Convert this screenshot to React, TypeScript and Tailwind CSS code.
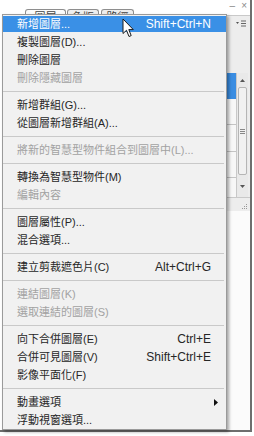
import React from "react";

type MenuItem =
  | { label: string; shortcut?: string; disabled?: boolean; active?: boolean; submenu?: boolean }
  | "sep";

const items: MenuItem[] = [
  { label: "新增圖層...", shortcut: "Shift+Ctrl+N", active: true },
  { label: "複製圖層(D)..." },
  { label: "刪除圖層" },
  { label: "刪除隱藏圖層", disabled: true },
  "sep",
  { label: "新增群組(G)..." },
  { label: "從圖層新增群組(A)..." },
  "sep",
  { label: "將新的智慧型物件組合到圖層中(L)...", disabled: true },
  "sep",
  { label: "轉換為智慧型物件(M)" },
  { label: "編輯內容", disabled: true },
  "sep",
  { label: "圖層屬性(P)..." },
  { label: "混合選項..." },
  "sep",
  { label: "建立剪裁遮色片(C)", shortcut: "Alt+Ctrl+G" },
  "sep",
  { label: "連結圖層(K)", disabled: true },
  { label: "選取連結的圖層(S)", disabled: true },
  "sep",
  { label: "向下合併圖層(E)", shortcut: "Ctrl+E" },
  { label: "合併可見圖層(V)", shortcut: "Shift+Ctrl+E" },
  { label: "影像平面化(F)" },
  "sep",
  { label: "動畫選項", submenu: true },
  { label: "浮動視窗選項..." },
];

function Cursor() {
  return (
    <svg width="13" height="20" viewBox="0 0 13 20" className="absolute left-[122px] top-[18px] z-10">
      <path
        d="M1 1 L1 15.5 L4.5 12.3 L7 18.5 L9.2 17.6 L6.8 11.6 L11.3 11.6 Z"
        fill="#ffffff"
        stroke="#1a1a1a"
        strokeWidth="1"
        strokeLinejoin="round"
      />
    </svg>
  );
}

function Panel() {
  return (
    <div className="flex-1 flex flex-col">
      {/* tab strip, lower half sits under the menu */}
      <div className="h-[15px] flex justify-between items-start">
        <div className="flex items-start pt-[9px] pl-[3px] gap-[1px]">
          {["圖層", "色版", "路徑"].map((t, i) => (
            <div
              key={t}
              className={`h-[16px] flex items-center justify-center border border-b-0 border-[#8e8e8e] rounded-t-[3px] text-[11px] text-[#444] ${
                i === 0 ? "w-[41px] bg-[#fbfbfb]" : i === 1 ? "w-[32px] bg-[#eeeeee]" : "w-[33px] bg-[#eeeeee] ml-[1px]"
              }`}
            >
              {t}
            </div>
          ))}
        </div>
        <div className="flex items-center gap-[6px] pr-[3px] pt-[1px] text-[10px] leading-[10px] text-[#8a8a8a]">
          <span>–</span>
          <span>×</span>
        </div>
      </div>

      {/* panel header */}
      <div className="h-[15px] border-t border-[#c9c9c9] bg-[#ededed] flex justify-end items-center pr-[3px]">
        <svg width="11" height="7" viewBox="0 0 11 7">
          <path d="M0 2 L3 2 L1.5 4 Z" fill="#555" />
          <path d="M5 1 H10 M5 3.5 H10 M5 6 H10" stroke="#666" strokeWidth="1" />
        </svg>
      </div>

      {/* options area */}
      <div className="h-[43px] bg-[#ededed]" />

      {/* layer list + scrollbar */}
      <div className="h-[124px] flex bg-[#ededed]">
        <div className="flex-1 flex flex-col bg-[#f7f7f7]">
          <div className="h-[26px] bg-[#3a8de2]" />
          <div className="h-[26px] border-b border-[#c4c4c4]" />
          <div className="h-[27px] border-b border-[#c4c4c4]" />
          <div className="h-[26px] border-b border-[#c4c4c4]" />
        </div>
        <div className="w-[12px] mr-[2px] flex flex-col border-l border-[#c8c8c8] bg-[#e9e9e9]">
          <div className="h-[14px] flex items-center justify-center">
            <svg width="5" height="3" viewBox="0 0 5 3">
              <path d="M0 3 L2.5 0 L5 3 Z" fill="#555" />
            </svg>
          </div>
          <div className="flex-1 mx-[1px] rounded-[2px] border border-[#b5b5b5] bg-[#f1f1f1] flex items-center justify-center">
            <div className="flex flex-col gap-[1px]">
              <div className="w-[5px] h-px bg-[#888]" />
              <div className="w-[5px] h-px bg-[#888]" />
              <div className="w-[5px] h-px bg-[#888]" />
            </div>
          </div>
          <div className="h-[22px] flex items-center justify-center">
            <svg width="5" height="3" viewBox="0 0 5 3">
              <path d="M0 0 L5 0 L2.5 3 Z" fill="#555" />
            </svg>
          </div>
        </div>
      </div>

      {/* panel footer */}
      <div className="h-[14px] border-t border-[#c9c9c9] bg-[#ededed] flex justify-end items-end pr-[3px] pb-[2px]">
        <svg width="5" height="5" viewBox="0 0 5 5">
          <rect x="4" y="0" width="1" height="1" fill="#999" />
          <rect x="2" y="2" width="1" height="1" fill="#999" />
          <rect x="4" y="2" width="1" height="1" fill="#999" />
          <rect x="0" y="4" width="1" height="1" fill="#999" />
          <rect x="2" y="4" width="1" height="1" fill="#999" />
          <rect x="4" y="4" width="1" height="1" fill="#999" />
        </svg>
      </div>

      <div className="flex-1 bg-[#fbfbfb]" />
    </div>
  );
}

function ContextMenu() {
  return (
    <div className="absolute left-[2px] top-[14px] w-[225px] border border-[#9a9a9a] bg-[#f1f1f1] shadow-[2px_2px_3px_rgba(0,0,0,0.35)]">
      {items.map((item, i) =>
        item === "sep" ? (
          <div key={i} className="h-[9px] flex items-center pr-[2px]">
            <div className="flex-1 h-px bg-[#c9c9c9]" />
          </div>
        ) : (
          <div key={i} className="h-[18px] py-px">
            <div
              className={`h-[16px] flex items-center justify-between pl-[14px] text-[11px] leading-[16px] ${
                item.submenu ? "pr-[8px]" : "pr-[15px]"
              } ${
                item.active
                  ? "bg-[#3a90e6] text-white"
                  : item.disabled
                  ? "text-[#a2a2a2]"
                  : "text-[#262626]"
              }`}
            >
              <span className="whitespace-nowrap">{item.label}</span>
              {item.shortcut && <span className="text-[12px] whitespace-nowrap">{item.shortcut}</span>}
              {item.submenu && (
                <svg width="4" height="7" viewBox="0 0 4 7">
                  <path d="M0 0 L4 3.5 L0 7 Z" fill="#111" />
                </svg>
              )}
            </div>
          </div>
        )
      )}
    </div>
  );
}

export default function App() {
  return (
    <div className="relative w-[254px] h-[436px] bg-white overflow-hidden font-['Liberation_Sans','Noto_Sans_CJK_TC',sans-serif]">
      <div className="w-[252px] h-[432px] flex border-r-2 border-b-2 border-[#6e6e6e] bg-white">
        <div className="w-[22px] bg-white" />
        <Panel />
      </div>
      <ContextMenu />
      <Cursor />
    </div>
  );
}
